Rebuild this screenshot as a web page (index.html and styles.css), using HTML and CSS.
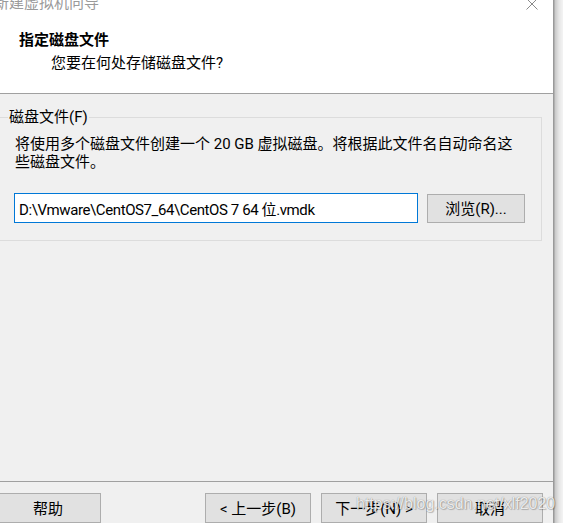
FILE: index.html
```html
<!DOCTYPE html>
<html lang="zh-CN">
<head>
<meta charset="utf-8">
<title>新建虚拟机向导</title>
<link rel="stylesheet" href="styles.css">
</head>
<body>
<div class="page">
  <div class="window">
    <div class="header">
      <div class="titlebar">
        <span class="title">新建虚拟机向导</span>
        <svg class="close" width="12" height="12" viewBox="0 0 12 12"><path d="M0.5 0.5 L11.5 11.5 M11.5 0.5 L0.5 11.5" stroke="#8a8a8a" stroke-width="1" fill="none"/></svg>
      </div>
      <div class="heading">指定磁盘文件</div>
      <div class="subheading">您要在何处存储磁盘文件?</div>
    </div>
    <div class="content">
      <fieldset class="group">
        <legend class="group-label">磁盘文件(F)</legend>
        <div class="desc">将使用多个磁盘文件创建一个 20 GB 虚拟磁盘。将根据此文件名自动命名这些磁盘文件。</div>
        <div class="file-row">
          <input class="path" type="text" value="D:\Vmware\CentOS7_64\CentOS 7 64 位.vmdk">
          <button class="btn browse">浏览(R)...</button>
        </div>
      </fieldset>
    </div>
    <div class="footer">
      <button class="btn fbtn help">帮助</button>
      <button class="btn fbtn back">&lt; 上一步(B)</button>
      <button class="btn fbtn next">下一步(N) &gt;</button>
      <button class="btn fbtn cancel">取消</button>
    </div>
  </div>
  <div class="edge"></div>
</div>
<div class="watermark">https://blog.csdn.net/xlf2020</div>
</body>
</html>
```
FILE: styles.css
```css
html, body {
  margin: 0;
  padding: 0;
}
body {
  width: 563px;
  height: 523px;
  overflow: hidden;
  position: relative;
  font-family: Roboto, "Noto Sans CJK SC", sans-serif;
  font-size: 15px;
  color: #000;
  background: #f2f2f2;
}
.page {
  display: flex;
  height: 523px;
}
.window {
  width: 553px;
  display: flex;
  flex-direction: column;
  background: #f0f0f0;
}
.edge {
  flex: 1;
  background: linear-gradient(to right, #9a9a9a 0, #9a9a9a 1px, #c8c8c8 2px, #e6e6e6 6px, #f4f4f4 10px);
}
.header {
  height: 94px;
  background: #fff;
  border-bottom: 1px solid #a0a0a0;
  display: flex;
  flex-direction: column;
}
.titlebar {
  height: 10px;
  display: flex;
  justify-content: space-between;
  align-items: flex-start;
}
.title {
  margin-top: -4px;
  margin-left: -6px;
  line-height: 15px;
  color: #9a9a9a;
  white-space: nowrap;
}
.close {
  margin-top: -2px;
  margin-right: 15px;
}
.heading {
  margin-top: 20px;
  margin-left: 19px;
  line-height: 20px;
  font-weight: bold;
}
.subheading {
  margin-top: 3px;
  margin-left: 51px;
  line-height: 20px;
}
.content {
  height: 391px;
  border-bottom: 1px solid #a0a0a0;
  box-sizing: border-box;
  padding-top: 15px;
}
.group {
  box-sizing: border-box;
  width: 544px;
  margin: 0 0 0 -2px;
  border: 1px solid #dcdcdc;
  padding: 0 0 17px 0;
}
.group-label {
  margin-left: 9px;
  padding: 0 1px;
  line-height: 17px;
}
.desc {
  width: 510px;
  margin: 9px 0 0 16px;
  line-height: 18px;
}
.file-row {
  display: flex;
  align-items: flex-end;
  gap: 9px;
  margin: 22px 0 0 15px;
}
.path {
  box-sizing: border-box;
  width: 404px;
  height: 30px;
  margin: 0;
  border: 1px solid #0078d7;
  padding: 0 4px;
  background: #fff;
  font-family: Roboto, "Noto Sans CJK SC", sans-serif;
  font-size: 15px;
  letter-spacing: -0.4px;
  color: #000;
  outline: none;
}
.btn {
  box-sizing: border-box;
  margin: 0;
  border: 1px solid #adadad;
  background: #e1e1e1;
  font-family: Roboto, "Noto Sans CJK SC", sans-serif;
  font-size: 15px;
  color: #000;
  padding: 0;
}
.browse {
  width: 98px;
  height: 29px;
  line-height: 20px;
}
.footer {
  flex: 1;
  display: flex;
  align-items: flex-start;
  padding-top: 11px;
}
.fbtn {
  width: 106px;
  height: 30px;
  line-height: 20px;
  padding-top: 2px;
  flex: none;
}
.help {
  margin-left: -5px;
}
.back {
  margin-left: 104px;
}
.next,
.cancel {
  margin-left: 10px;
}
.watermark {
  position: absolute;
  left: 356px;
  top: 496px;
  font-family: "Liberation Sans", sans-serif;
  font-size: 16px;
  line-height: 16px;
  color: rgba(255, 255, 255, 0.85);
  text-shadow: 0 0 1px rgba(0, 0, 0, 0.45), 1px 1px 1px rgba(0, 0, 0, 0.2);
  white-space: nowrap;
  pointer-events: none;
}
```
